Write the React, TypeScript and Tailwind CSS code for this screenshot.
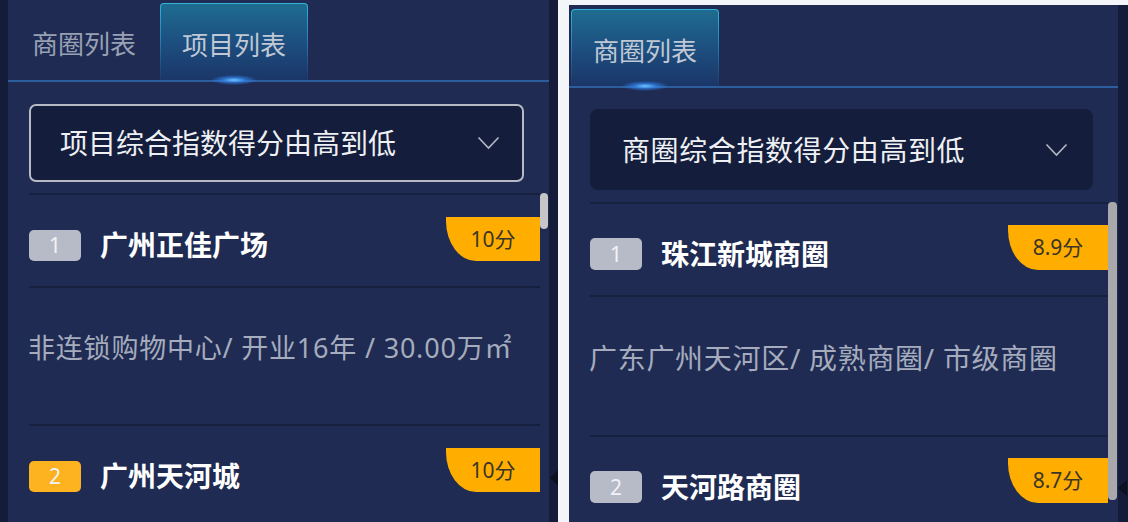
import React from "react";

const FONT = "font-['Noto_Sans','Noto_Sans_CJK_SC',sans-serif]";

function Chevron() {
  return (
    <svg width="23" height="14" viewBox="0 0 23 14" fill="none">
      <polyline points="1.5,1.5 11.5,12 21.5,1.5" stroke="#b3b8c4" strokeWidth="1.6" strokeLinejoin="miter" />
    </svg>
  );
}

function ActiveTab({ label }: { label: string }) {
  return (
    <div className="relative w-[148px] h-[77px] rounded-t-[4px] bg-linear-to-b from-[#2fb6de] via-[#287db0] to-[#1c3a6a] px-px pt-px">
      <div className="relative h-full w-full rounded-t-[3px] bg-linear-to-b from-[#1f6c90] via-[#1c4f80] to-[#1b3668] flex items-center justify-center pt-[5px]">
        <span className="text-[26px] leading-none text-[#bfc8d4]">{label}</span>
        <div className="absolute bottom-[-5px] left-1/2 -translate-x-1/2 w-[46px] h-[10px] rounded-full bg-[radial-gradient(ellipse_at_center,#6cc4ff_0%,rgba(50,130,235,0.7)_35%,transparent_72%)]" />
      </div>
    </div>
  );
}

function InactiveTab({ label }: { label: string }) {
  return (
    <div className="w-[148px] h-[77px] flex items-center justify-center pt-[5px]">
      <span className="text-[26px] leading-none text-[#98a1b4]">{label}</span>
    </div>
  );
}

function Header({
  rank,
  rankBg,
  title,
  score,
  tagW,
  tagH,
  badgeH,
}: {
  rank: number;
  rankBg: string;
  title: string;
  score: string;
  tagW: string;
  tagH: string;
  badgeH: string;
}) {
  return (
    <div className="h-[93px] shrink-0 border-t-2 border-[#17203f] flex items-end pb-[25px]">
      <div
        className={`w-[52px] ${badgeH} rounded-[5px] flex items-center justify-center text-[21px] leading-none text-[#f2f2f6] ${rankBg}`}
      >
        {rank}
      </div>
      <div className="ml-[19px] text-[28px] leading-[31px] font-bold text-white">{title}</div>
      <div className="flex-1" />
      <div
        className={`${tagW} ${tagH} bg-[#ffae00] rounded-bl-[30px_40px] flex items-center justify-center text-[21px] leading-none text-[#3a3526]`}
      >
        {score}
      </div>
    </div>
  );
}

function Desc({ text, h, pt, size }: { text: string; h: string; pt: string; size: string }) {
  return (
    <div className={`${h} shrink-0 border-t-2 border-[#17203f] ${pt}`}>
      <div className={`${size} leading-[30px] text-[#a5acbd] whitespace-nowrap -ml-[1px]`}>{text}</div>
    </div>
  );
}

function LeftPanel() {
  return (
    <div className="w-[541px] h-full bg-[#1f2b52] flex flex-col overflow-hidden">
      <div className="flex items-end gap-[2px] pl-[2px] pt-[3px] h-[80px] shrink-0">
        <InactiveTab label="商圈列表" />
        <ActiveTab label="项目列表" />
      </div>
      <div className="h-[2px] shrink-0 bg-[#2c5e9e]" />
      <div className="mt-[22px] ml-[21px] w-[495px] h-[78px] shrink-0 rounded-[7px] border-2 border-[#b6bac4] bg-[#141d3b] flex items-center pl-[29px] pr-[22px]">
        <span className="text-[28px] leading-none text-[#eef0f4]">项目综合指数得分由高到低</span>
        <div className="flex-1" />
        <Chevron />
      </div>
      <div className="mt-[11px] flex flex-1 min-h-0">
        <div className="ml-[21px] w-[511px] flex flex-col">
          <Header rank={1} rankBg="bg-[#b7bbc7]" title="广州正佳广场" score="10分" tagW="w-[94px]" tagH="h-[44px]" badgeH="h-[31px]" />
          <Desc text="非连锁购物中心/ 开业16年 / 30.00万㎡" h="h-[138px]" pt="pt-[45px]" size="text-[27px] tracking-[0.8px]" />
          <Header rank={2} rankBg="bg-[#fdb21f]" title="广州天河城" score="10分" tagW="w-[94px]" tagH="h-[44px]" badgeH="h-[31px]" />
        </div>
        <div className="w-[8px] shrink-0">
          <div className="h-[36px] w-[8px] rounded-[4px] bg-[#c6c6c8]" />
        </div>
      </div>
    </div>
  );
}

function RightPanel() {
  return (
    <div className="w-[549px] h-full bg-[#1f2b52] flex flex-col overflow-hidden">
      <div className="flex items-end pl-[2px] pt-[3px] h-[81px] shrink-0">
        <ActiveTab label="商圈列表" />
      </div>
      <div className="h-[2px] shrink-0 bg-[#2c5e9e]" />
      <div className="mt-[21px] ml-[21px] w-[503px] h-[81px] shrink-0 rounded-[8px] bg-[#141d3b] flex items-center pl-[32px] pr-[25px]">
        <span className="text-[28px] leading-none text-[#eef0f4] tracking-[0.6px]">商圈综合指数得分由高到低</span>
        <div className="flex-1" />
        <Chevron />
      </div>
      <div className="mt-[12px] flex flex-1 min-h-0">
        <div className="ml-[21px] w-[518px] flex flex-col">
          <Header rank={1} rankBg="bg-[#b7bbc7]" title="珠江新城商圈" score="8.9分" tagW="w-[100px]" tagH="h-[45px]" badgeH="h-[32px]" />
          <Desc text="广东广州天河区/ 成熟商圈/ 市级商圈" h="h-[140px]" pt="pt-[46px]" size="text-[28px] tracking-[0.7px]" />
          <Header rank={2} rankBg="bg-[#b7bbc7]" title="天河路商圈" score="8.7分" tagW="w-[100px]" tagH="h-[45px]" badgeH="h-[32px]" />
        </div>
        <div className="w-[9px] shrink-0">
          <div className="h-[298px] w-[9px] rounded-[4px] bg-[#a9a9ab]" />
        </div>
      </div>
    </div>
  );
}

export default function App() {
  return (
    <div className={`w-[1128px] h-[522px] flex bg-[#f4f5f8] overflow-hidden ${FONT}`}>
      <div className="w-[558px] h-full flex bg-[#141c39]">
        <div className="w-[8px] h-full bg-[#141c39]" />
        <LeftPanel />
        <div className="w-[9px] h-full flex flex-col">
          <div className="mt-[470px] ml-[1px] w-0 h-0 border-y-[8px] border-y-transparent border-r-[8px] border-r-[#0c1020]" />
        </div>
      </div>
      <div className="w-[11px] h-full" />
      <div className="w-[559px] h-full flex flex-col pt-[5px]">
        <div className="flex flex-1 min-h-0">
          <RightPanel />
          <div className="w-[10px] h-full bg-[#141c39] flex flex-col">
            <div className="mt-[475px] w-0 h-0 border-y-[8px] border-y-transparent border-r-[9px] border-r-[#0c1020]" />
          </div>
        </div>
      </div>
    </div>
  );
}
